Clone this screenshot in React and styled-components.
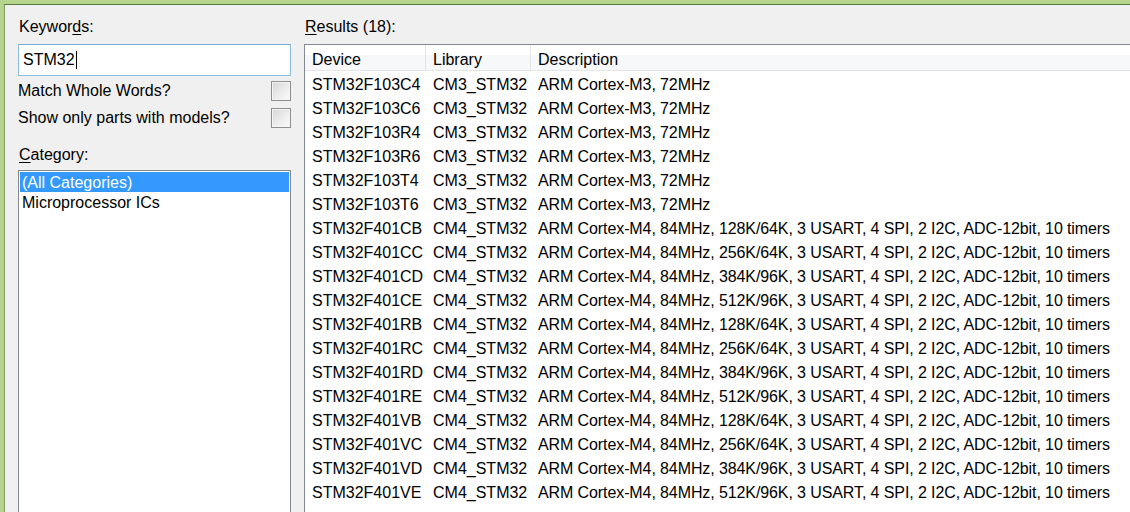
import styled, { createGlobalStyle } from "styled-components";

const GlobalStyle = createGlobalStyle`
  html, body {
    margin: 0;
    padding: 0;
    background: #f0f0f0;
    overflow: hidden;
  }
  body {
    font-family: "Liberation Sans", Arial, sans-serif;
    font-size: 16px;
    color: #000;
  }
`;

const parts = [
  ["STM32F103C4", "CM3_STM32", "ARM Cortex-M3, 72MHz"],
  ["STM32F103C6", "CM3_STM32", "ARM Cortex-M3, 72MHz"],
  ["STM32F103R4", "CM3_STM32", "ARM Cortex-M3, 72MHz"],
  ["STM32F103R6", "CM3_STM32", "ARM Cortex-M3, 72MHz"],
  ["STM32F103T4", "CM3_STM32", "ARM Cortex-M3, 72MHz"],
  ["STM32F103T6", "CM3_STM32", "ARM Cortex-M3, 72MHz"],
  ["STM32F401CB", "CM4_STM32", "ARM Cortex-M4, 84MHz, 128K/64K, 3 USART, 4 SPI, 2 I2C, ADC-12bit, 10 timers"],
  ["STM32F401CC", "CM4_STM32", "ARM Cortex-M4, 84MHz, 256K/64K, 3 USART, 4 SPI, 2 I2C, ADC-12bit, 10 timers"],
  ["STM32F401CD", "CM4_STM32", "ARM Cortex-M4, 84MHz, 384K/96K, 3 USART, 4 SPI, 2 I2C, ADC-12bit, 10 timers"],
  ["STM32F401CE", "CM4_STM32", "ARM Cortex-M4, 84MHz, 512K/96K, 3 USART, 4 SPI, 2 I2C, ADC-12bit, 10 timers"],
  ["STM32F401RB", "CM4_STM32", "ARM Cortex-M4, 84MHz, 128K/64K, 3 USART, 4 SPI, 2 I2C, ADC-12bit, 10 timers"],
  ["STM32F401RC", "CM4_STM32", "ARM Cortex-M4, 84MHz, 256K/64K, 3 USART, 4 SPI, 2 I2C, ADC-12bit, 10 timers"],
  ["STM32F401RD", "CM4_STM32", "ARM Cortex-M4, 84MHz, 384K/96K, 3 USART, 4 SPI, 2 I2C, ADC-12bit, 10 timers"],
  ["STM32F401RE", "CM4_STM32", "ARM Cortex-M4, 84MHz, 512K/96K, 3 USART, 4 SPI, 2 I2C, ADC-12bit, 10 timers"],
  ["STM32F401VB", "CM4_STM32", "ARM Cortex-M4, 84MHz, 128K/64K, 3 USART, 4 SPI, 2 I2C, ADC-12bit, 10 timers"],
  ["STM32F401VC", "CM4_STM32", "ARM Cortex-M4, 84MHz, 256K/64K, 3 USART, 4 SPI, 2 I2C, ADC-12bit, 10 timers"],
  ["STM32F401VD", "CM4_STM32", "ARM Cortex-M4, 84MHz, 384K/96K, 3 USART, 4 SPI, 2 I2C, ADC-12bit, 10 timers"],
  ["STM32F401VE", "CM4_STM32", "ARM Cortex-M4, 84MHz, 512K/96K, 3 USART, 4 SPI, 2 I2C, ADC-12bit, 10 timers"],
];

const App = () => {
  return (
    <>
      <GlobalStyle />
      <Window>
        <Dialog>
          <LeftPane>
            <Label>
              Keywor<u>d</u>s:
            </Label>
            <SearchBox>
              STM32
              <Caret />
            </SearchBox>
            <CheckRow $first>
              <span>Match Whole Words?</span>
              <CheckBox />
            </CheckRow>
            <CheckRow>
              <span>Show only parts with models?</span>
              <CheckBox />
            </CheckRow>
            <Label $top={14}>
              <u>C</u>ategory:
            </Label>
            <ListBox>
              <ListItem $selected>(All Categories)</ListItem>
              <ListItem>Microprocessor ICs</ListItem>
            </ListBox>
          </LeftPane>
          <RightPane>
            <Label>
              <u>R</u>esults (18):
            </Label>
            <Table>
              <HeaderRow>
                <HeadCell $w={121}>Device</HeadCell>
                <HeadCell $w={105}>Library</HeadCell>
                <HeadCell>Description</HeadCell>
              </HeaderRow>
              <Body>
                {parts.map((p) => (
                  <Row key={p[0]}>
                    <Cell $w={121}>{p[0]}</Cell>
                    <Cell $w={105}>{p[1]}</Cell>
                    <Cell $tight>{p[2]}</Cell>
                  </Row>
                ))}
              </Body>
            </Table>
          </RightPane>
        </Dialog>
      </Window>
    </>
  );
};

const Window = styled.div`
  height: 512px;
  border-top: 4px solid #b7d48f;
  border-left: 4px solid #b7d48f;
  box-sizing: border-box;
  overflow: hidden;
`;

const Dialog = styled.div`
  min-height: 100%;
  background: #f0f0f0;
  border-top: 1px solid #56783a;
  border-left: 1px solid #7e9c5e;
  display: flex;
  align-items: flex-start;
  gap: 13px;
  padding: 12px 0 0 13px;
  box-sizing: border-box;
`;

const LeftPane = styled.div`
  width: 273px;
  flex: none;
  display: flex;
  flex-direction: column;
`;

const RightPane = styled.div`
  flex: 1;
  display: flex;
  flex-direction: column;
  min-width: 0;
`;

const Label = styled.div`
  flex: none;
  height: 19px;
  line-height: 19px;
  padding-left: 1px;
  margin-top: ${(p) => p.$top || 0}px;
  margin-bottom: 8px;
  white-space: nowrap;
  u {
    text-decoration-thickness: 1px;
    text-underline-offset: 2px;
  }
`;

const SearchBox = styled.div`
  flex: none;
  height: 32px;
  box-sizing: border-box;
  background: #fff;
  border: 1px solid #8cbbe6;
  border-top-color: #7aa9d9;
  padding: 0 4px;
  display: flex;
  align-items: center;
`;

const Caret = styled.span`
  width: 1px;
  height: 18px;
  background: #000;
  margin-left: 1px;
`;

const CheckRow = styled.div`
  flex: none;
  height: 27px;
  margin-top: ${(p) => (p.$first ? 1 : 0)}px;
  display: flex;
  align-items: center;
  justify-content: space-between;
  white-space: nowrap;
`;

const CheckBox = styled.div`
  width: 20px;
  height: 20px;
  box-sizing: border-box;
  border: 1px solid #8f8f8f;
  box-shadow: inset 0 0 0 1px #f4f4f4;
  background: linear-gradient(135deg, #d6d6d6 0%, #ececec 55%, #fbfbfb 100%);
`;

const ListBox = styled.div`
  flex: none;
  height: 400px;
  margin-top: -2px;
  background: #fff;
  border: 1px solid #828790;
  padding: 1px;
`;

const ListItem = styled.div`
  height: 20px;
  line-height: 21px;
  padding-left: 2px;
  background: ${(p) => (p.$selected ? "#3399ff" : "transparent")};
  color: ${(p) => (p.$selected ? "#fff" : "#000")};
`;

const Table = styled.div`
  flex: none;
  height: 480px;
  background: #fff;
  border: 1px solid #828790;
  border-right: none;
`;

const HeaderRow = styled.div`
  display: flex;
  height: 25px;
  overflow: hidden;
  background: linear-gradient(#ffffff 0%, #ffffff 40%, #f7f8f9 40%, #f7f8f9 100%);
  border-bottom: 1px solid #e5e5e5;
`;

const HeadCell = styled.div`
  width: ${(p) => (p.$w ? `${p.$w}px` : "auto")};
  flex: ${(p) => (p.$w ? "none" : "1")};
  box-sizing: border-box;
  padding-left: 7px;
  line-height: 29px;
  border-right: ${(p) => (p.$w ? "1px solid #e5e5e5" : "none")};
  white-space: nowrap;
`;

const Body = styled.div`
  padding-top: 2px;
`;

const Row = styled.div`
  display: flex;
  height: 24px;
  line-height: 24px;
`;

const Cell = styled.div`
  width: ${(p) => (p.$w ? `${p.$w}px` : "auto")};
  flex: ${(p) => (p.$w ? "none" : "1")};
  box-sizing: border-box;
  padding-left: 7px;
  letter-spacing: ${(p) => (p.$tight ? "-0.1px" : "0")};
  white-space: nowrap;
  overflow: hidden;
`;

export default App;
